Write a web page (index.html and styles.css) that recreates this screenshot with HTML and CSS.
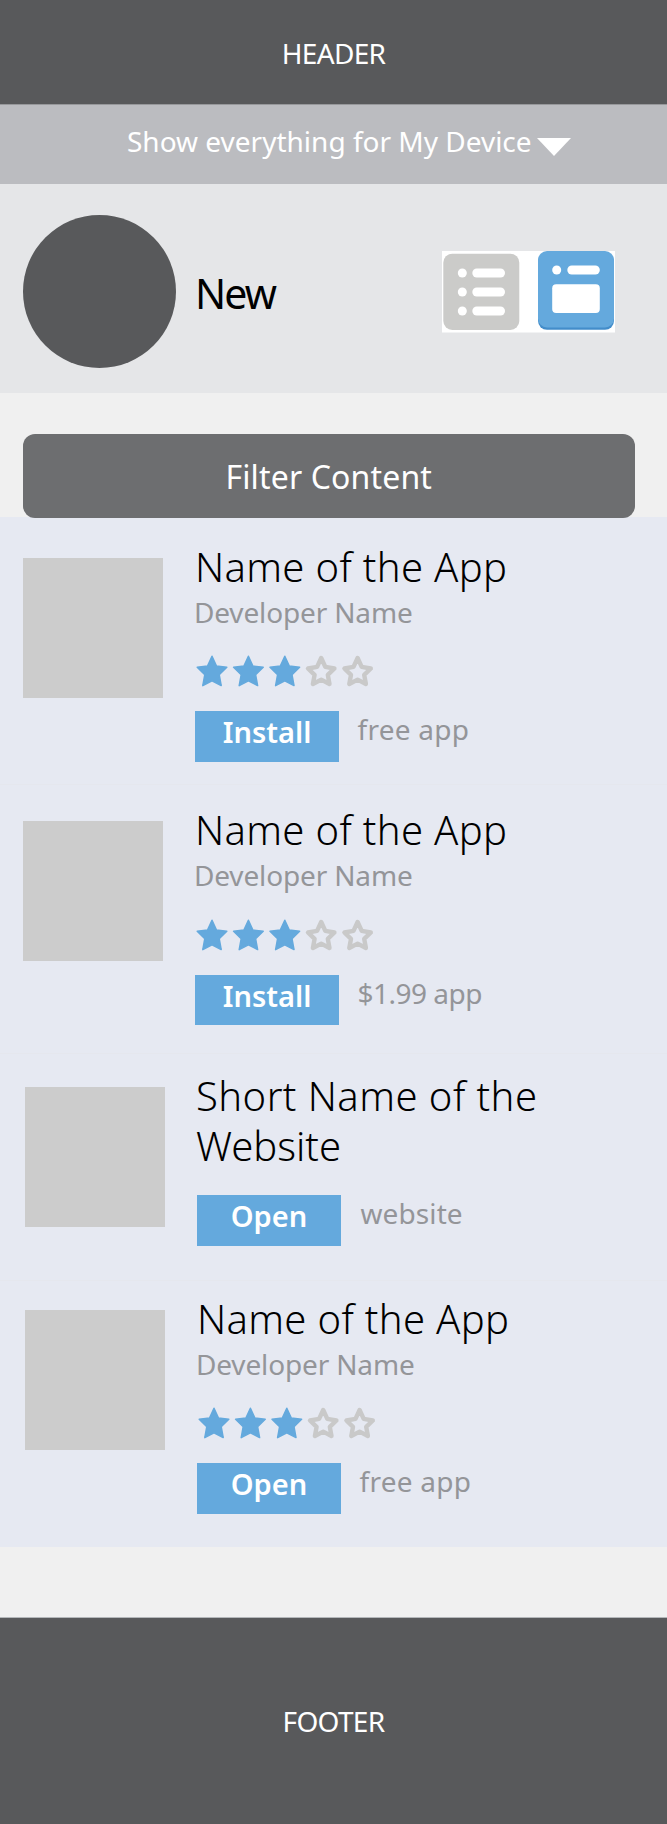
FILE: index.html
```html
<!DOCTYPE html>
<html lang="en">
<head>
<meta charset="utf-8">
<title>New apps</title>
<link rel="stylesheet" href="styles.css">
</head>
<body>
<svg class="defs" width="0" height="0" aria-hidden="true">
  <symbol id="stars" viewBox="0 0 178 32">
    <g fill="#64a9dd" stroke="#64a9dd" stroke-width="1.5" stroke-linejoin="round">
      <path id="star" d="M16 1.2 L20.5 11.1 L30.8 12.3 L23.2 19.7 L25.2 30.6 L16 25.8 L6.800 30.600 L8.800 19.700 L1.200 12.300 L11.500 11.100 Z"/>
      <use href="#star" x="36.4"/>
      <use href="#star" x="72.800"/>
    </g>
    <g fill="none" stroke="#c9c9c9" stroke-width="4.400" stroke-linejoin="round">
      <path id="hollow" d="M125.200 3 L129.300 11.900 L138.400 13.500 L131.800 19.900 L133.500 29 L125.200 24.600 L116.900 29 L118.600 19.900 L112 13.500 L121.100 11.900 Z"/>
      <use href="#hollow" x="36.400"/>
    </g>
  </symbol>
</svg>
<header class="header"><span class="caps">HEADER</span></header>
<div class="device">
  <span class="device-label">Show everything for My Device</span>
  <svg class="caret" width="34" height="18" viewBox="0 0 34 18"><path d="M0 0H34L17 18Z" fill="#fff"/></svg>
</div>
<section class="category">
  <div class="avatar"></div>
  <h1 class="category-name">New</h1>
  <svg class="views" width="173" height="82" viewBox="0 0 173 82">
    <rect width="173" height="81.500" fill="#fff"/>
    <rect x="1.300" y="2.700" width="76" height="76.300" rx="9" fill="#cbcbc9"/>
    <g fill="#fff">
      <circle cx="20.300" cy="22" r="4.500"/><rect x="30.300" y="17.500" width="32.700" height="9" rx="4.500"/>
      <circle cx="20.300" cy="41" r="4.500"/><rect x="30.300" y="36.500" width="32.700" height="9" rx="4.500"/>
      <circle cx="20.300" cy="60" r="4.500"/><rect x="30.300" y="55.500" width="32.700" height="9" rx="4.500"/>
    </g>
    <rect x="96" y="2" width="76" height="76.800" rx="9" fill="#438dca"/>
    <rect x="96" y="0" width="76" height="76.500" rx="9" fill="#64a9dd"/>
    <g fill="#fff">
      <circle cx="114.700" cy="19" r="4.500"/><rect x="125.300" y="14.500" width="32.500" height="9" rx="4.500"/>
      <rect x="110.200" y="33.200" width="47.600" height="28.800" rx="4"/>
    </g>
  </svg>
</section>
<div class="filter"><button class="filter-button">Filter Content</button></div>
<main class="list">
  <article class="item item-first">
    <div class="thumb"></div>
    <div class="info">
      <h2 class="title">Name of the App</h2>
      <p class="developer">Developer Name</p>
      <svg class="stars"><use href="#stars"/></svg>
      <div class="actions"><button class="action">Install</button><span class="price">free app</span></div>
    </div>
  </article>
  <article class="item item-second">
    <div class="thumb"></div>
    <div class="info">
      <h2 class="title">Name of the App</h2>
      <p class="developer">Developer Name</p>
      <svg class="stars"><use href="#stars"/></svg>
      <div class="actions"><button class="action">Install</button><span class="price cost">$1.99 app</span></div>
    </div>
  </article>
  <article class="item item-site">
    <div class="thumb"></div>
    <div class="info">
      <h2 class="title"><span class="wide">Short Name of the</span><br>Website</h2>
      <div class="actions"><button class="action">Open</button><span class="price site">website</span></div>
    </div>
  </article>
  <article class="item item-last">
    <div class="thumb"></div>
    <div class="info">
      <h2 class="title">Name of the App</h2>
      <p class="developer">Developer Name</p>
      <svg class="stars"><use href="#stars"/></svg>
      <div class="actions"><button class="action">Open</button><span class="price">free app</span></div>
    </div>
  </article>
</main>
<footer class="footer"><span class="caps">FOOTER</span></footer>
</body>
</html>
```
FILE: styles.css
```css
* { box-sizing: border-box; }
body {
  margin: 0;
  background: #f0f0f0;
  color: #000;
  font-family: "Noto Sans", "Open Sans", sans-serif;
  font-size: 28px;
  white-space: nowrap;
}
h1, h2, p { margin: 0; }
button { border: 0; padding: 0; margin: 0; font-family: inherit; }
.defs { display: block; height: 0; }
.header, .footer { background: #58595b; color: #fff; text-align: center; }
.header { height: 104px; padding-top: 33px; line-height: 40px; }
.footer { height: 207px; margin-top: 70px; padding-top: 77px; line-height: 52px; border-top: 1px solid #b4b7ba; }
.caps { letter-spacing: -0.700px; }
.device {
  display: flex;
  height: 80px;
  padding: 28px 0 0 127px;
  background: #bbbcc0;
  border-top: 1px solid #97989b;
  color: #fff;
}
.device-label { width: 410px; line-height: 16px; }
.caret { margin-top: 5px; }
.category { display: flex; height: 209px; padding-left: 23px; background: #e5e6e8; }
.avatar { width: 153px; height: 153px; margin-top: 31px; border-radius: 50%; background: #58595b; }
.category-name { width: 247px; margin-left: 19px; padding-top: 84px; font-size: 41px; font-weight: 400; line-height: 50px; letter-spacing: -1.800px; }
.views { margin-top: 67px; }
.filter { height: 124px; padding: 41px 0 0 23px; }
.filter-button {
  position: relative;
  display: block;
  width: 611.500px;
  height: 83.500px;
  padding-top: 3px;
  border-radius: 12px;
  background: #6d6e70;
  color: #fff;
  font-size: 32px;
  line-height: 80px;
  letter-spacing: 0.150px;
}
.list { background: #e6e9f2; }
.item { display: flex; gap: 32.500px; padding-left: 23px; border-top: 1px solid #e5e7ee; }
.item-first { height: 267px; padding-top: 23.500px; border-top-color: transparent; }
.item-second { height: 269px; padding-top: 20px; }
.item-site { height: 227px; padding: 16.500px 0 0 25px; }
.item-last { height: 267px; padding: 12.500px 0 0 25px; }
.thumb { width: 139.500px; height: 140px; margin-top: 16px; background: #ccc; }
.title { font-size: 40px; font-weight: 300; line-height: 50px; letter-spacing: 0.330px; }
.item-site .title { margin-left: -1px; letter-spacing: 0; }
.wide { letter-spacing: 0.450px; }
.developer { margin: 3px 0 0 -1px; color: #949599; line-height: 34px; letter-spacing: -0.150px; }
.stars { display: block; width: 178px; height: 32px; margin: 26.500px 0 24px 1px; }
.actions { display: flex; gap: 18.500px; }
.item-site .actions { margin-top: 24.500px; }
.action { width: 144px; height: 50.500px; padding-bottom: 9px; background: #64a9dd; color: #fff; font-size: 29px; font-weight: 600; line-height: 41px; }
.price { color: #949599; line-height: 36px; letter-spacing: 0.250px; }
.cost { letter-spacing: -0.500px; }
.site { margin-left: 1px; letter-spacing: 0.100px; }
```
